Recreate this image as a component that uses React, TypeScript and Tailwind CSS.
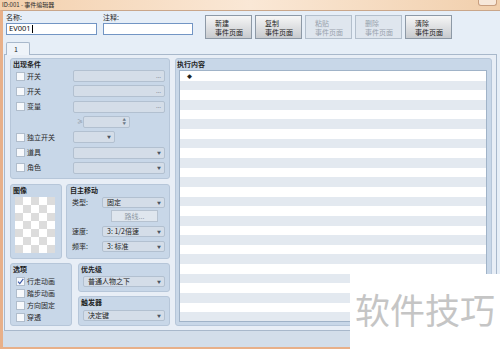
import React from "react";

const Chk = ({ checked }: { checked?: boolean }) => (
  <div className="w-[9px] h-[9px] shrink-0 bg-[#f7f9fc] border border-[#b0bdcc] flex items-center justify-center">
    {checked && (
      <svg viewBox="0 0 10 10" className="w-[9px] h-[9px]">
        <path d="M1.5 5.2 L4 8 L9 1.2" stroke="#3856a6" strokeWidth="1.5" fill="none" />
      </svg>
    )}
  </div>
);

const Field = ({ w, h = "h-[12px]", dots, arrow, text, dark }: { w: string; h?: string; dots?: boolean; arrow?: boolean; text?: string; dark?: boolean }) => (
  <div className={`${w} ${h} shrink-0 rounded-[2px] border border-[#b2c0d0] bg-[#d4dde8] flex items-center justify-between pl-[4px] pr-[3px]`}>
    <span className={dark ? "text-[#222]" : "text-[#6b7785]"}>{text}</span>
    {dots && <span className="text-[5px] text-[#5f6b79] leading-[5px]">…</span>}
    {arrow && <span className="text-[4px] text-[#4a5563]">▼</span>}
  </div>
);

const Btn = ({ top, disabled }: { top: string; disabled?: boolean }) => (
  <div
    className={
      disabled
        ? "w-[47px] h-[24px] border border-[#b3bfcc] bg-[#dfe6ee] text-[#98a2ad] pl-[9px] pt-[3px] leading-[9px]"
        : "w-[47px] h-[24px] border border-[#8d99a6] bg-gradient-to-b from-[#f6f6f6] to-[#c8cbcf] text-[#1c1c1c] pl-[9px] pt-[3px] leading-[9px]"
    }
  >
    <div>{top}</div>
    <div>事件页面</div>
  </div>
);

const groupCls = "bg-[#c8d7e8] border border-[#b6c6d9] rounded-[3px]";

export default function App() {
  const rows = Array.from({ length: 27 });
  const cells = Array.from({ length: 35 });
  const conds = [
    { label: "开关", kind: "dots" },
    { label: "开关", kind: "dots" },
    { label: "变量", kind: "dots" },
    { label: "", kind: "spin" },
    { label: "独立开关", kind: "small" },
    { label: "道具", kind: "arrow" },
    { label: "角色", kind: "arrow" },
  ];
  return (
    <div className="w-[500px] h-[349px] overflow-hidden relative flex flex-col font-['Noto_Sans_CJK_SC',sans-serif] text-[7px] leading-none text-[#1f1f1f] bg-[#f3d6b8]">
      {/* title bar */}
      <div className="h-[10px] shrink-0 relative bg-gradient-to-r from-[#f3d0ad] via-[#fae8d6] to-[#f1cfac] text-[6px] leading-[9px] pl-[2px] text-[#2a2a2a]">
        ID:001 - 事件编辑器
        <div className="absolute right-[3px] top-0 w-[19px] h-[6px] rounded-b-[3px] border border-t-0 border-[#c89f80] bg-[#f7e8da]" />
      </div>

      {/* body */}
      <div className="flex-1 min-h-0 flex flex-col border-l-[3px] border-b-[2px] border-t border-[#e8b089] border-t-[#c9a68a] bg-[#e6eef7]">
        {/* name / note / buttons */}
        <div className="flex shrink-0 pl-[3px] pt-[2px]">
          <div className="w-[91px] flex flex-col">
            <div className="h-[9px] leading-[9px]">名称:</div>
            <div className="mt-[1px] h-[12px] bg-white border border-[#7295c4] flex items-center pl-[2px] font-['Noto_Sans',sans-serif] text-[7.5px] text-[#111]">
              EV001
              <span className="w-px h-[8px] bg-black ml-px" />
            </div>
          </div>
          <div className="ml-[6px] w-[90px] flex flex-col">
            <div className="h-[9px] leading-[9px]">注释:</div>
            <div className="mt-[1px] h-[12px] bg-white border border-[#7295c4]" />
          </div>
          <div className="ml-[12px] mt-[2px] flex gap-[3px]">
            <Btn top="新建" />
            <Btn top="复制" />
            <Btn top="粘贴" disabled />
            <Btn top="删除" disabled />
            <Btn top="清除" />
          </div>
        </div>

        {/* tab */}
        <div className="mt-[3px] pl-[3px] shrink-0 flex">
          <div className="w-[24px] h-[13px] -mb-px relative border border-b-0 border-[#a8b8cb] bg-[#eef3f9] rounded-t-[2px] pl-[7px] leading-[13px]">1</div>
        </div>

        {/* tab panel */}
        <div className="ml-[1px] w-[493px] h-[277px] shrink-0 border border-[#a8b8cb] bg-[#e8eef6] flex pl-[5px] pt-[3px] gap-[5px]">
          {/* left column */}
          <div className="w-[160px] flex flex-col">
            {/* conditions */}
            <div className={`${groupCls} h-[121px] flex flex-col`}>
              <div className="pl-[2px] pt-[2px] h-[9px] leading-[7px] font-bold">出现条件</div>
              <div className="mt-[2px] flex flex-col gap-[3.33px]">
                {conds.map((c, i) => (
                  <div key={i} className="h-[12px] flex items-center pl-[5px]">
                    <div className="w-[57px] flex items-center">
                      {c.label && <Chk />}
                      <span className="ml-[2px] text-[#2a2a2a]">{c.label}</span>
                    </div>
                    {c.kind === "dots" && <Field w="w-[92px]" dots />}
                    {c.kind === "arrow" && <Field w="w-[92px]" arrow />}
                    {c.kind === "small" && <Field w="w-[42px]" arrow />}
                    {c.kind === "spin" && (
                      <>
                        <span className="w-[10px] pl-[4px] text-[#8b96a3] text-[6px]">≥</span>
                        <div className="w-[47px] h-[12px] rounded-[2px] border border-[#b2c0d0] bg-[#d4dde8] flex flex-col items-end justify-center pr-[3px] text-[3.5px] text-[#6b7785] leading-[4px]">
                          <span>▲</span>
                          <span>▼</span>
                        </div>
                      </>
                    )}
                  </div>
                ))}
              </div>
            </div>

            {/* image + movement */}
            <div className="mt-[5px] h-[75px] flex gap-[4px]">
              <div className={`${groupCls} w-[52px] flex flex-col`}>
                <div className="pl-[2px] pt-[2px] h-[9px] leading-[7px] font-bold">图像</div>
                <div className="mt-[3px] ml-[4px] w-[40px] grid grid-cols-5">
                  {cells.map((_, i) => (
                    <div
                      key={i}
                      className={
                        (Math.floor(i / 5) + (i % 5)) % 2 === 0
                          ? "w-[8px] h-[8px] bg-[#dcdcdc]"
                          : "w-[8px] h-[8px] bg-white"
                      }
                    />
                  ))}
                </div>
              </div>
              <div className={`${groupCls} w-[104px] flex flex-col`}>
                <div className="pl-[3px] pt-[2px] h-[9px] leading-[7px] font-bold">自主移动</div>
                <div className="mt-[3px] h-[11px] flex items-center pl-[5px]">
                  <span className="w-[30px] text-[#2a2a2a]">类型:</span>
                  <Field w="w-[63px]" h="h-[11px]" arrow text="固定" dark />
                </div>
                <div className="mt-[2px] ml-[44px] w-[47px] h-[12px] border border-[#b6c2d0] bg-[#dfe6ee] text-[#8e99a5] flex items-center justify-center">
                  路线...
                </div>
                <div className="mt-[4px] h-[11px] flex items-center pl-[5px]">
                  <span className="w-[30px] text-[#2a2a2a]">速度:</span>
                  <Field w="w-[63px]" h="h-[11px]" arrow text="3: 1/2倍速" dark />
                </div>
                <div className="mt-[4px] h-[11px] flex items-center pl-[5px]">
                  <span className="w-[30px] text-[#2a2a2a]">频率:</span>
                  <Field w="w-[63px]" h="h-[11px]" arrow text="3: 标准" dark />
                </div>
              </div>
            </div>

            {/* options + priority + trigger */}
            <div className="mt-[4px] h-[63px] flex gap-[6px]">
              <div className={`${groupCls} w-[62px] flex flex-col`}>
                <div className="pl-[2px] pt-[2px] h-[10px] leading-[7px] font-bold">选项</div>
                <div className="mt-[1px] flex flex-col">
                  {["行走动画", "踏步动画", "方向固定", "穿透"].map((t, i) => (
                    <div key={t} className="h-[12px] flex items-center pl-[5px]">
                      <Chk checked={i === 0} />
                      <span className="ml-[2px] text-[#2a2a2a]">{t}</span>
                    </div>
                  ))}
                </div>
              </div>
              <div className="w-[92px] flex flex-col gap-[4px]">
                <div className={`${groupCls} h-[29px] flex flex-col`}>
                  <div className="pl-[2px] pt-[2px] h-[9px] leading-[7px] font-bold">优先级</div>
                  <div className="mt-[3px] pl-[4px]">
                    <Field w="w-[82px]" h="h-[11px]" arrow text="普通人物之下" dark />
                  </div>
                </div>
                <div className={`${groupCls} h-[30px] flex flex-col`}>
                  <div className="pl-[2px] pt-[2px] h-[9px] leading-[7px] font-bold">触发器</div>
                  <div className="mt-[4px] pl-[4px]">
                    <Field w="w-[82px]" h="h-[11px]" arrow text="决定键" dark />
                  </div>
                </div>
              </div>
            </div>
          </div>

          {/* contents */}
          <div className={`${groupCls} w-[317px] h-[268px] flex flex-col`}>
            <div className="h-[11px] pl-[1px] leading-[11px] font-bold">执行内容</div>
            <div className="ml-[3px] mr-[4px] h-[252px] border border-[#a0b3c8] bg-white overflow-hidden">
              {rows.map((_, i) => (
                <div
                  key={i}
                  className={i % 2 === 0 ? "h-[9.67px] bg-white pl-[7px] text-[5px] leading-[9.67px]" : "h-[9.67px] bg-[#e3e9f0]"}
                >
                  {i === 0 ? "◆" : null}
                </div>
              ))}
            </div>
          </div>
        </div>

        <div className="flex-1 bg-[#d3deea]" />
      </div>

      {/* watermark */}
      <div className="absolute left-[350px] top-[274px] w-[150px] h-[75px] bg-white pl-[5px] pt-[17px]">
        <div className="text-[35px] leading-[35px] text-[#c5c5c5] whitespace-nowrap">软件技巧</div>
      </div>
    </div>
  );
}
